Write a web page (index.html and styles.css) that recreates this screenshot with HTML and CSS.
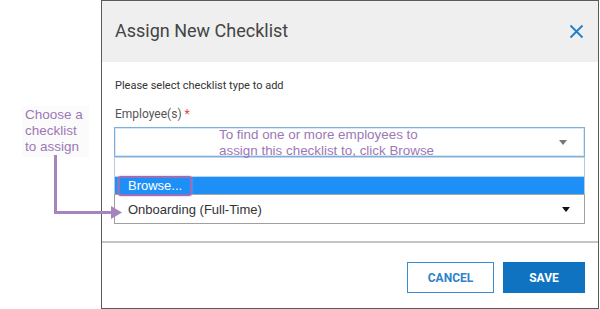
FILE: index.html
```html
<!DOCTYPE html>
<html>
<head>
<meta charset="utf-8">
<link rel="stylesheet" href="styles.css">
</head>
<body>
<div class="page">
  <div class="annot">
    <div class="callout">Choose a<br>checklist<br>to assign</div>
  </div>
  <div class="dialog">
    <div class="header">
      <div class="title">Assign New Checklist</div>
      <svg class="close" width="15" height="15" viewBox="0 0 15 15"><path d="M1.5 1.5 L13.5 13.5 M13.5 1.5 L1.5 13.5" stroke="#1f7fca" stroke-width="1.8" fill="none"/></svg>
    </div>
    <div class="body">
      <div class="intro">Please select checklist type to add</div>
      <div class="label">Employee(s) <span class="req">*</span></div>
      <div class="input">
        <span class="caret grey"></span>
      </div>
      <div class="list">
        <div class="blank"></div>
        <div class="option active"><span class="browse">Browse...</span></div>
        <div class="select">Onboarding (Full-Time)<span class="caret black"></span></div>
      </div>
    </div>
    <div class="footer">
      <button class="btn cancel">CANCEL</button>
      <button class="btn save">SAVE</button>
    </div>
  </div>
</div>
<div class="tip">To find one or more employees to<br>assign this checklist to, click Browse</div>
<svg class="arrow" width="130" height="230" viewBox="0 0 130 230"><path d="M55.5 155 V212.5 H113" stroke="#a684bd" stroke-width="3" fill="none"/><path d="M111 206 L122 212.5 L111 219 Z" fill="#a684bd"/></svg>
</body>
</html>
```

FILE: styles.css
```css
html, body {
  margin: 0;
  padding: 0;
  background: #ffffff;
}
body {
  width: 600px;
  height: 309px;
  position: relative;
  overflow: hidden;
}
.page {
  display: flex;
}
.annot {
  width: 101px;
  flex: none;
}
.callout {
  margin: 106px 0 0 22px;
  width: 64px;
  padding: 1px 0 2px 3px;
  background: #fbfbfb;
  font-family: "Liberation Sans", Arial, sans-serif;
  font-size: 13.5px;
  line-height: 16px;
  color: #9d78b6;
}
.dialog {
  width: 496px;
  height: 307px;
  border: 1px solid #5a5a5a;
  display: flex;
  flex-direction: column;
  font-family: Roboto, "Liberation Sans", sans-serif;
}
.header {
  height: 61px;
  background: #efefef;
  display: flex;
  align-items: center;
  justify-content: space-between;
  padding: 0 14px 0 13px;
}
.title {
  font-size: 18px;
  color: #444;
  margin-top: -2px;
}
.close {
  display: block;
  margin-top: -1px;
}
.body {
  padding: 17px 13px 0 12px;
  height: 162px;
  border-bottom: 2px solid #c4c4c4;
}
.intro {
  font-size: 11px;
  line-height: 14px;
  color: #333;
  padding-left: 1px;
}
.label {
  margin-top: 14px;
  font-size: 12px;
  line-height: 14px;
  color: #555;
  padding-left: 1px;
}
.req {
  color: #e0463f;
}
.input {
  margin-top: 6px;
  height: 28px;
  border: 1px solid #7fb0dc;
  box-shadow: inset 0 0 0 1px #d9e8f6;
  display: flex;
  align-items: center;
  justify-content: flex-end;
  padding-right: 17px;
}
.caret {
  width: 0;
  height: 0;
  border-left: 4px solid transparent;
  border-right: 4px solid transparent;
  border-top: 5px solid #777;
}
.caret.black {
  border-top-color: #111;
}
.list {
  border: 1px solid #b9c9da;
  border-top: none;
  font-family: "Liberation Sans", Arial, sans-serif;
  font-size: 13px;
}
.blank {
  height: 18px;
  border-top: 1px solid #c6d6e8;
}
.option.active {
  height: 17px;
  background: #1e8ff7;
  border-top: 1px solid #b9d6f4;
  display: flex;
  align-items: center;
  padding-left: 3px;
}
.browse {
  color: #fff;
  font-size: 13px;
  line-height: 14px;
  padding: 1px 8px 1px 8px;
  border: 2px solid #9a6fb6;
  border-radius: 3px;
  box-shadow: 0 0 2px #b39acb;
  width: 54px;
}
.select {
  height: 28px;
  border-top: 1px solid #a8a8a8;
  border-bottom: 1px solid #a0a0a0;
  margin: 0 -1px -1px -1px;
  border-left: 1px solid #a0a0a0;
  border-right: 1px solid #a0a0a0;
  display: flex;
  align-items: center;
  justify-content: space-between;
  padding: 0 14px 0 13px;
  color: #333;
}
.footer {
  flex: 1;
  display: flex;
  justify-content: flex-end;
  align-items: flex-start;
  padding: 19px 13px 0 0;
  gap: 9px;
}
.btn {
  height: 31px;
  font-family: Roboto, "Liberation Sans", sans-serif;
  font-weight: bold;
  font-size: 12px;
  margin: 0;
  cursor: pointer;
}
.cancel {
  width: 87px;
  background: #fff;
  border: 1px solid #3c8bd2;
  color: #2f82c8;
}
.save {
  width: 82px;
  background: #0f73c2;
  border: none;
  color: #fff;
}
.tip {
  position: absolute;
  left: 219px;
  top: 127px;
  font-family: "Liberation Sans", Arial, sans-serif;
  font-size: 13.4px;
  line-height: 16px;
  color: #9d78b6;
}
.arrow {
  position: absolute;
  left: 0;
  top: 0;
}
```
